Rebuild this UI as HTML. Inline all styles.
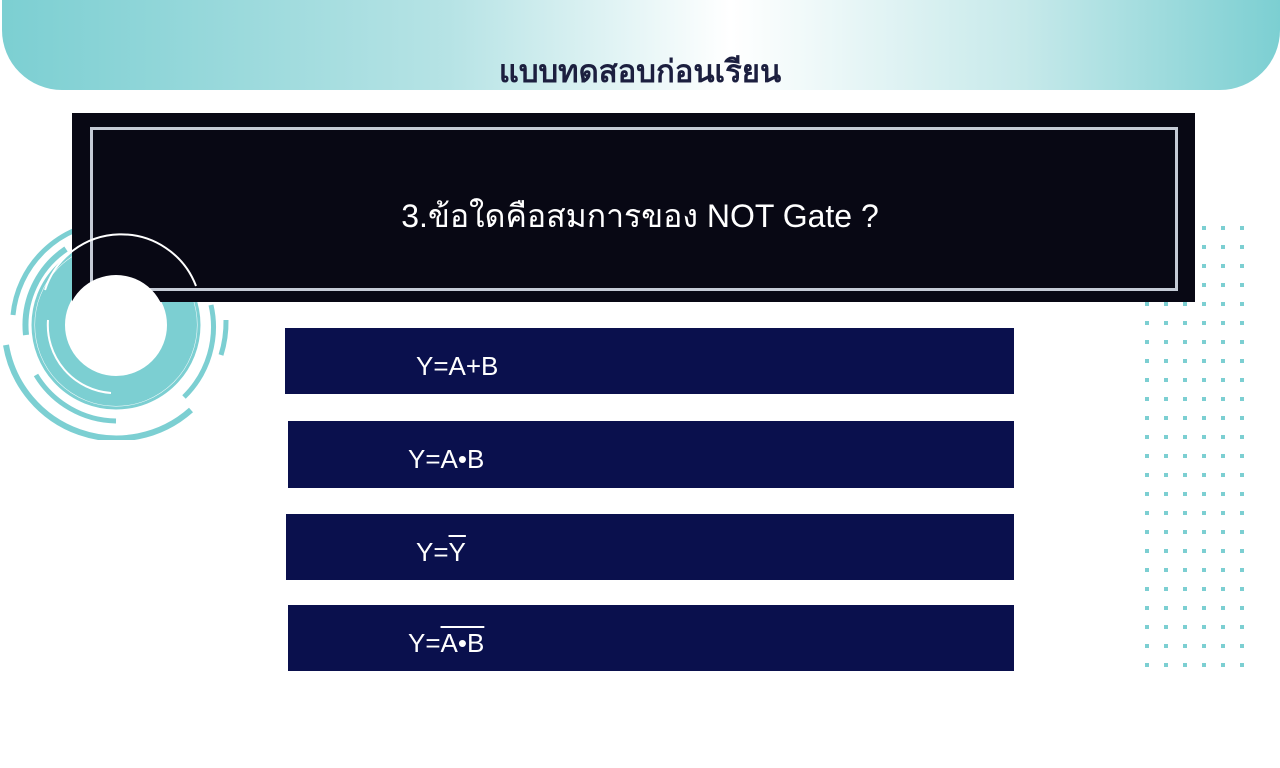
<!DOCTYPE html>
<html><head><meta charset="utf-8"><style>
body{margin:0;width:1280px;height:768px;background:#fff;position:relative;overflow:hidden;font-family:"Liberation Sans","Noto Sans CJK SC",sans-serif}
.hdr{position:absolute;left:2px;top:-60px;width:1278px;height:150px;border-radius:0 0 60px 60px;background:linear-gradient(90deg,#7ccfd2 0%,#b6e3e5 35%,#ffffff 57%,#c6e9ea 80%,#7ccfd2 100%)}
.title{position:absolute;left:0;width:1280px;top:46px;text-align:center;font-size:31px;font-weight:bold;color:#1c1f3f;font-family:"Liberation Sans","Noto Sans CJK SC","WenQuanYi Zen Hei",sans-serif}
.q{position:absolute;left:72px;top:113px;width:1123px;height:189px;background:#080814}
.qi{position:absolute;left:90px;top:127px;width:1082px;height:158px;border:3px solid #c5cbd6}
.qt{position:absolute;left:0;width:1280px;top:191px;text-align:center;color:#fff;font-size:32px}
.a{position:absolute;background:#0a104d;color:#fff;font-size:26px}
.a span{position:absolute;top:23px}
.ov{text-decoration:overline;text-decoration-thickness:2px}
</style></head><body>
<div class="hdr"></div>
<div class="title">แบบทดสอบก่อนเรียน</div>
<svg style="position:absolute;left:1140px;top:222px" width="110" height="450">
<defs><pattern id="p" x="5" y="4" width="19" height="19" patternUnits="userSpaceOnUse"><rect width="4" height="4" fill="#7ccfd2"/></pattern></defs>
<rect width="110" height="450" fill="url(#p)"/></svg>
<svg style="position:absolute;left:0;top:200px" width="240" height="240">
<g fill="none" stroke="#7ccfd2" transform="translate(116,125)">
<circle r="66" stroke-width="30"/>
<path d="M-68,-5 A68,68 0 0 0 -5,68" stroke="#fff" stroke-width="2"/>
<circle r="83" stroke-width="3"/>
<path d="M-6,-103 A103,103 0 0 0 -103,-10" stroke-width="5"/>
<path d="M-110,20 A112,112 0 0 0 75,85" stroke-width="6"/>
<path d="M95,-20 A98,98 0 0 1 68,72" stroke-width="5"/>
<path d="M-50,-76 A92,92 0 0 0 -90,10" stroke-width="6"/>
<path d="M-80,50 A95,95 0 0 0 0,96" stroke-width="5"/>
<path d="M110,-5 A110,110 0 0 1 105,30" stroke-width="5"/>
</g></svg>
<div class="q"></div>
<div class="qi"></div>
<svg style="position:absolute;left:0;top:200px" width="240" height="240"><path d="M45,90 A80,80 0 0 1 196,86" fill="none" stroke="#fff" stroke-width="2"/><circle cx="116" cy="125" r="50" fill="#fff"/></svg>
<div class="qt">3.ข้อใดคือสมการของ NOT Gate ?</div>
<div class="a" style="left:285px;top:328px;width:729px;height:66px"><span style="left:131px">Y=A+B</span></div>
<div class="a" style="left:288px;top:421px;width:726px;height:67px"><span style="left:120px">Y=A•B</span></div>
<div class="a" style="left:286px;top:514px;width:728px;height:66px"><span style="left:130px">Y=<span class="ov" style="position:static">Y</span></span></div>
<div class="a" style="left:288px;top:605px;width:726px;height:66px"><span style="left:120px">Y=<span class="ov" style="position:static">A•B</span></span></div>
</body></html>
